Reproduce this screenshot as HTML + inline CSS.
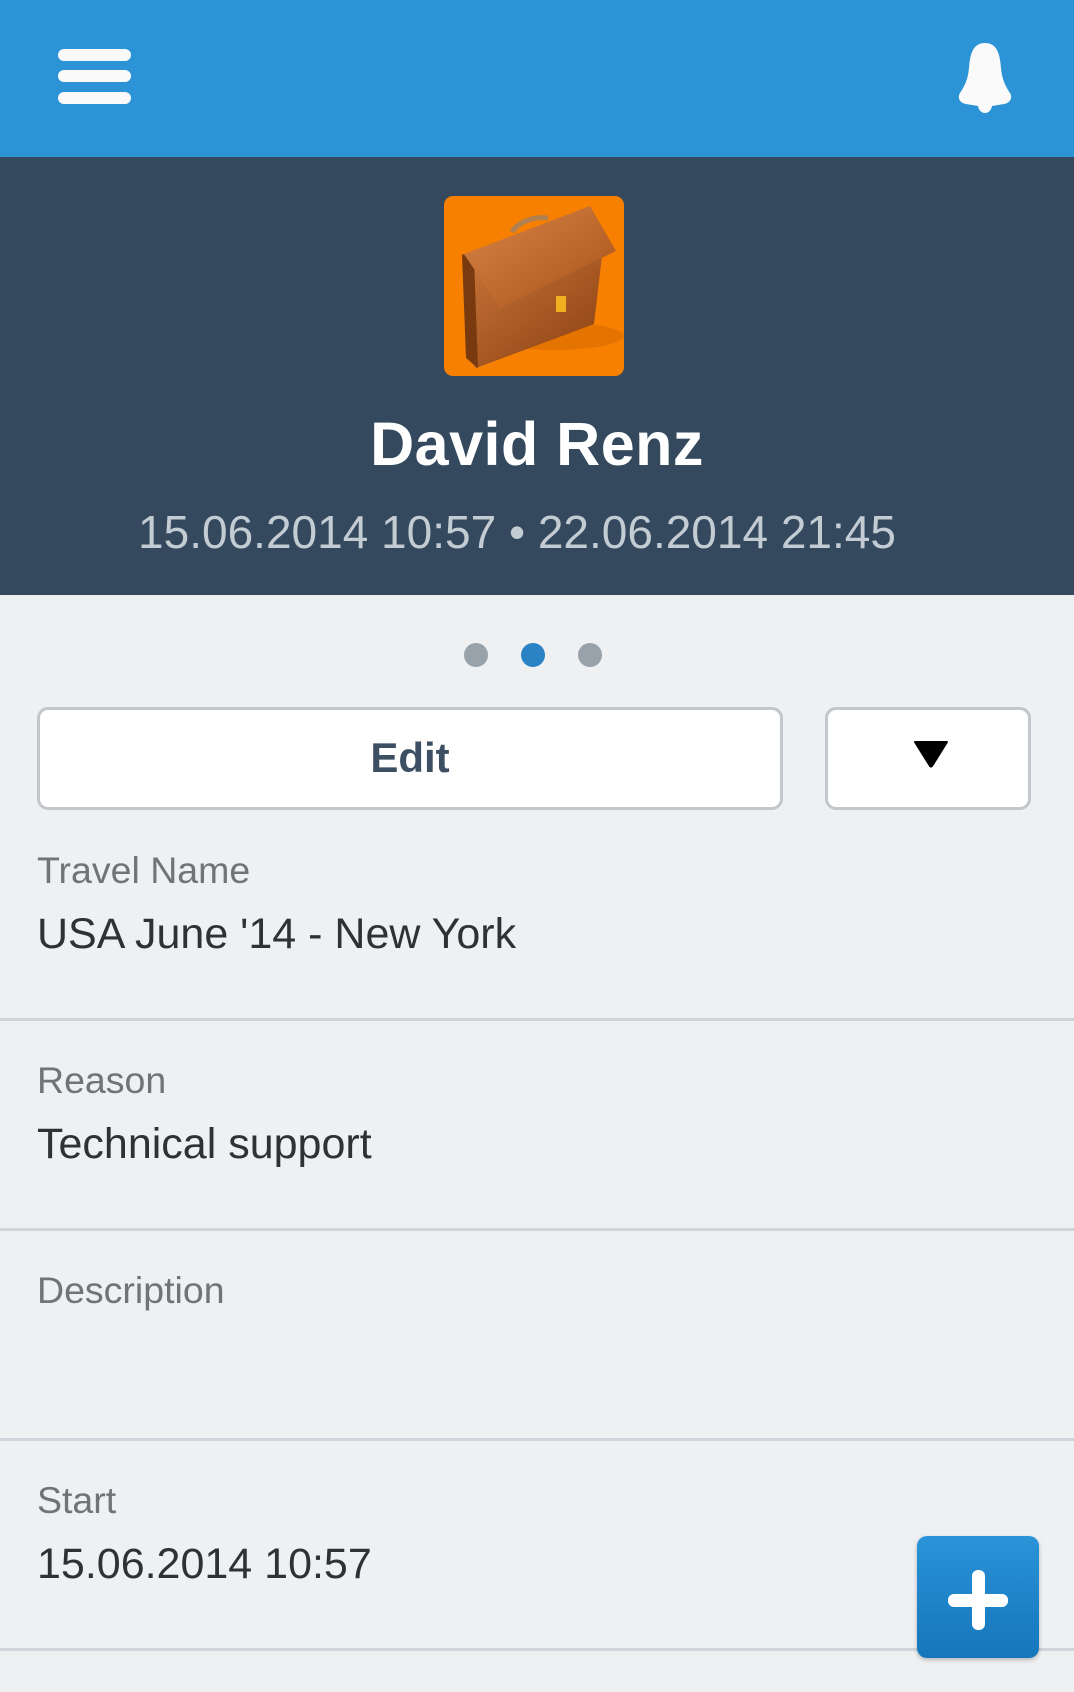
<!DOCTYPE html>
<html><head><meta charset="utf-8"><style>
*{margin:0;padding:0;box-sizing:border-box}
body{width:1074px;height:1692px;overflow:hidden;background:#eff0f2;font-family:"Liberation Sans",sans-serif;position:relative}
.abs{position:absolute}
.hdr{left:0;top:0;width:1074px;height:157px;background:#2c94d6}
.bar{left:58px;width:73px;height:12px;border-radius:6px;background:#fafafa}
.band{left:0;top:157px;width:1074px;height:438px;background:#34495e}
.name{left:0;width:1074px;text-align:center;color:#fff;font-weight:bold;font-size:61px;top:409px;letter-spacing:0.5px}
.date{left:-20px;width:1074px;text-align:center;color:#c3cbd3;font-size:46px;top:505px}
.dot{width:24px;height:24px;border-radius:50%;top:643px;background:#97a2ab}
.btn{background:#fff;border:3px solid #c3c7cb;border-radius:11px}
.lbl{left:37px;color:#6e7477;font-size:37.5px}
.val{left:37px;color:#2e3236;font-size:43px}
.div{left:0;width:1074px;height:3px;background:#cfd5da}
</style></head><body>
<div class="abs hdr"></div>
<div class="abs bar" style="top:49px"></div>
<div class="abs bar" style="top:70px"></div>
<div class="abs bar" style="top:92px"></div>
<svg class="abs" style="left:950px;top:40px" width="70" height="74" viewBox="0 0 70 74">
<path d="M35 3C23 3 20 14 19 28C18 40 14 47 10 53C7 58 10 63 16 64L28 66C29 71 32 73 35 73C38 73 41 71 42 66L54 64C60 63 63 58 60 53C56 47 52 40 51 28C50 14 47 3 35 3Z" fill="#fafafa"/>
</svg>
<div class="abs band"></div>
<div class="abs" style="left:444px;top:196px;width:180px;height:180px;border-radius:9px;background:#f78000;overflow:hidden">
<svg width="180" height="180" viewBox="0 0 180 180">
<defs><linearGradient id="g1" x1="0" y1="0" x2="1" y2="1"><stop offset="0" stop-color="#d88446"/><stop offset="1" stop-color="#a8521a"/></linearGradient>
<linearGradient id="g2" x1="0" y1="0" x2="1" y2="1"><stop offset="0" stop-color="#c8743a"/><stop offset="1" stop-color="#8a4010"/></linearGradient></defs>
<path d="M68 36C74 26 90 20 104 22" stroke="#b08050" stroke-width="5" fill="none"/>
<ellipse cx="110" cy="140" rx="70" ry="14" fill="#d86a00" opacity=".6"/>
<path d="M20 60L22 160L32 172L150 128L158 60Z" fill="url(#g2)"/>
<path d="M18 58L30 62L34 172L22 162Z" fill="#7a3a10"/>
<path d="M20 58L146 10L172 55L56 112Z" fill="url(#g1)"/>
<rect x="112" y="100" width="10" height="16" fill="#f0b020"/>
</svg></div>
<div class="abs name">David Renz</div>
<div class="abs date">15.06.2014 10:57 • 22.06.2014 21:45</div>
<div class="abs dot" style="left:464px"></div>
<div class="abs dot" style="left:521px;background:#2b83c6"></div>
<div class="abs dot" style="left:578px"></div>
<div class="abs btn" style="left:37px;top:707px;width:746px;height:103px"></div>
<div class="abs" style="left:37px;top:734px;width:746px;text-align:center;font-size:42px;font-weight:bold;color:#3d4f62">Edit</div>
<div class="abs btn" style="left:825px;top:707px;width:206px;height:103px"></div>
<svg class="abs" style="left:912px;top:740px" width="38" height="28" viewBox="0 0 38 28"><path d="M3 2H35L20 26Q19 27 18 26Z" fill="#000" stroke="#000" stroke-width="2" stroke-linejoin="round"/></svg>
<div class="abs lbl" style="top:849px">Travel Name</div>
<div class="abs val" style="top:910px">USA June '14 - New York</div>
<div class="abs div" style="top:1018px"></div>
<div class="abs lbl" style="top:1059px">Reason</div>
<div class="abs val" style="top:1120px">Technical support</div>
<div class="abs div" style="top:1228px"></div>
<div class="abs lbl" style="top:1269px">Description</div>
<div class="abs div" style="top:1438px"></div>
<div class="abs lbl" style="top:1479px">Start</div>
<div class="abs val" style="top:1540px">15.06.2014 10:57</div>
<div class="abs div" style="top:1648px"></div>
<div class="abs" style="left:917px;top:1536px;width:122px;height:122px;border-radius:10px;background:linear-gradient(#2b93d8,#1576bb);box-shadow:0 2px 4px rgba(0,0,0,.25)"></div>
<div class="abs" style="left:948px;top:1594px;width:60px;height:13px;border-radius:6px;background:#fff"></div>
<div class="abs" style="left:972px;top:1570px;width:13px;height:60px;border-radius:6px;background:#fff"></div>
</body></html>
